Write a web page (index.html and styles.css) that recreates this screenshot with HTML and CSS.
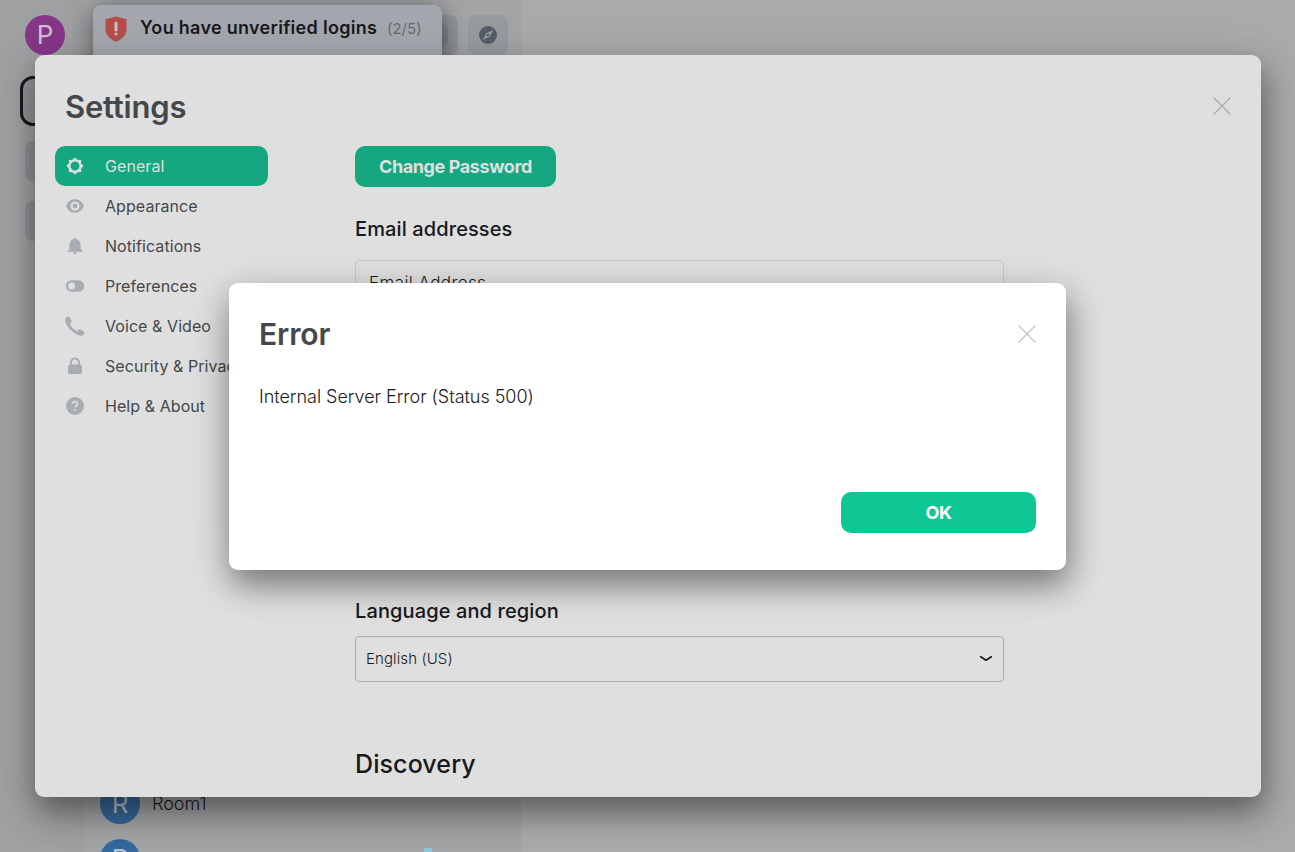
FILE: index.html
```html
<!DOCTYPE html>
<html lang="en">
<head>
<meta charset="utf-8">
<title>Settings</title>
<link rel="stylesheet" href="styles.css">
</head>
<body>
<div class="stage">
  <div class="app">
    <nav class="spaces">
      <div class="user">P</div>
      <div class="rule"></div>
      <div class="space active"></div>
      <div class="space"></div>
      <div class="space"></div>
    </nav>
    <aside class="rooms">
      <div class="toolbar">
        <div class="search"><span class="key"></span></div>
        <div class="explore">
          <svg width="18" height="18" viewBox="0 0 18 18"><circle cx="9" cy="9" r="9" fill="#575d68"/><path fill="#959a9f" fill-rule="evenodd" d="M14.2 4 10.800 10.800 3.800 14 7.200 7.200ZM9 7.700a1.300 1.300 0 1 0 0 2.600 1.300 1.300 0 0 0 0-2.600Z"/></svg>
        </div>
      </div>
      <div class="roomlist">
        <div class="room"><span class="avatar">R</span><span class="name">Room1</span></div>
        <div class="room"><span class="avatar bright">R</span><span class="picture"></span></div>
      </div>
    </aside>
    <main class="view"></main>
  </div>

  <div class="toasts">
    <div class="toast">
      <svg class="shield" width="22" height="26" viewBox="0 0 22 26"><path fill="#b74e4b" d="M11 0.5 21.5 3.3V13c0 6-4.5 10.5-10.5 12.7C5 23.500.500 19 .500 13V3.300Z"/><path d="M11 7v7" stroke="#c2c4c7" stroke-width="3" stroke-linecap="round"/><circle cx="11" cy="18" r="1.600" fill="#c2c4c7"/></svg>
      <span class="toast-title">You have unverified logins</span>
      <span class="toast-count">(2/5)</span>
    </div>
  </div>

  <div class="layer">
    <section class="dialog settings">
      <header class="head">
        <h1>Settings</h1>
        <svg class="close" width="18" height="18" viewBox="0 0 18 18"><path d="M.5.5l17 17M17.500.500l-17 17" stroke="#aaa" stroke-width="1.300" fill="none"/></svg>
      </header>
      <div class="columns">
        <ul class="tabs">
          <li class="tab selected"><svg width="20" height="20" viewBox="0 0 20 20"><circle cx="10" cy="10" r="5.700" fill="none" stroke="#dfdfdf" stroke-width="2.500"/><g fill="#dfdfdf"><circle cx="10" cy="3.100" r="1.400"/><circle cx="10" cy="16.900" r="1.400"/><circle cx="3.100" cy="10" r="1.400"/><circle cx="16.900" cy="10" r="1.400"/><circle cx="5.100" cy="5.100" r="1.400"/><circle cx="14.900" cy="5.100" r="1.400"/><circle cx="5.100" cy="14.900" r="1.400"/><circle cx="14.900" cy="14.900" r="1.400"/></g></svg><span>General</span></li>
          <li class="tab"><svg width="20" height="20" viewBox="0 0 20 20"><path fill="#a8adb4" fill-rule="evenodd" d="M1 10C2.500 5.800 5.800 3.200 10 3.200S17.500 5.800 19 10c-1.500 4.200-4.800 6.800-9 6.800S2.500 14.200 1 10ZM10 5.500a4.500 4.500 0 1 0 0 9 4.500 4.500 0 0 0 0-9Z"/><circle cx="10" cy="10" r="2.400" fill="#a8adb4"/></svg><span>Appearance</span></li>
          <li class="tab"><svg width="20" height="20" viewBox="0 0 20 20"><path fill="#a8adb4" d="M10 1.700c.8 0 1.300.5 1.300 1.200 2.600.6 4.200 2.700 4.200 5.600v4.200l1.800 2v1H2.700v-1l1.800-2V8.500c0-2.900 1.600-5 4.200-5.600 0-.7.5-1.200 1.300-1.200ZM8.200 16.600h3.600c0 1-.8 1.600-1.800 1.600s-1.800-.6-1.800-1.600Z"/></svg><span>Notifications</span></li>
          <li class="tab"><svg width="20" height="20" viewBox="0 0 20 20"><path fill="#a8adb4" fill-rule="evenodd" d="M6.500 4.200h7a5.800 5.800 0 0 1 0 11.600h-7a5.800 5.800 0 0 1 0-11.600ZM6.600 6.500a3.500 3.500 0 1 0 0 7 3.500 3.500 0 0 0 0-7Z"/></svg><span>Preferences</span></li>
          <li class="tab"><svg width="20" height="20" viewBox="0 0 20 20"><path fill="#a8adb4" d="M1 1.600C2 .4 3.500.2 4.400 1.300L6.500 4.600c.5.9 0 1.900-1 2.600-.6.600-.3 1.300 0 1.900 1.300 2.400 3 4.200 5.400 5.400.7.400 1.400.5 1.900-.1.700-1 1.800-1.400 2.700-.9l3.200 2c1.200.8 1 2.200 0 3.200-2 1.700-5.300.9-8.500-1.100C5.700 14.700 2.600 11.500 1 7.600.1 5.200-.1 2.900 1 1.600Z"/></svg><span>Voice &amp; Video</span></li>
          <li class="tab"><svg width="20" height="20" viewBox="0 0 20 20"><path fill="#a8adb4" fill-rule="evenodd" d="M5 8.500V6.600a5 5 0 0 1 10 0v1.900c1.300.1 2 .7 2 1.800v5.500c0 1.400-.7 2.200-2 2.200H5c-1.300 0-2-.8-2-2.200v-5.500c0-1.100.7-1.700 2-1.800Zm2 0h6V6.600a3 3 0 0 0-6 0Z"/></svg><span>Security &amp; Privacy</span></li>
          <li class="tab"><svg width="20" height="20" viewBox="0 0 20 20"><circle cx="10" cy="10" r="9" fill="#a8adb4"/><path d="M7.500 8c0-1.700 1-2.500 2.500-2.500s2.500.9 2.500 2.200c0 1.800-2.300 1.800-2.300 3.800" fill="none" stroke="#dfdfdf" stroke-width="1.700"/><circle cx="10.200" cy="14" r="1.100" fill="#dfdfdf"/></svg><span>Help &amp; About</span></li>
        </ul>
        <div class="content">
          <button class="button change">Change Password</button>
          <h3 class="email-title">Email addresses</h3>
          <div class="email-field">Email Address</div>
          <h3 class="language-title">Language and region</h3>
          <div class="select"><span>English (US)</span>
            <svg width="14" height="8" viewBox="0 0 14 8"><path d="M1.700 1.700 7 5.200l5.300-3.500" fill="none" stroke="#17191c" stroke-width="1.700" stroke-linecap="round" stroke-linejoin="round"/></svg>
          </div>
          <h2>Discovery</h2>
        </div>
      </div>
    </section>
  </div>

  <div class="layer front">
    <section class="dialog error">
      <header class="head">
        <h1>Error</h1>
        <svg class="close" width="18" height="18" viewBox="0 0 18 18"><path d="M.5.5l17 17M17.500.500l-17 17" stroke="#c4c4c4" stroke-width="1.300" fill="none"/></svg>
      </header>
      <p>Internal Server Error (Status 500)</p>
      <button class="button ok">OK</button>
    </section>
  </div>
</div>
</body>
</html>
```
FILE: styles.css
```css
* { box-sizing: border-box; }
body { margin: 0; overflow: hidden; font-family: Inter, "Liberation Sans", sans-serif; color: #17191c; }
h1, h2, h3, p, ul { margin: 0; padding: 0; }

.stage { display: grid; width: 1295px; height: 852px; overflow: hidden; }
.app, .toasts, .layer { grid-area: 1 / 1; min-width: 0; min-height: 0; }

.app { display: grid; grid-template-columns: 85px 436px 1fr; height: 852px; background: #a9aaab; }
.spaces { display: flex; flex-direction: column; padding: 15px 0 0 25px; background: #9fa0a1; }
.user { width: 40px; height: 40px; border-radius: 50%; background: #863688; color: #cfc0d0; font-size: 26px; line-height: 40px; text-align: center; }
.rule { height: 1px; margin: 10px 20px 10px 0; background: #969798; }
.space { width: 40px; height: 40px; margin-bottom: 20px; border-radius: 8px; background: #8e8f92; }
.space.active { width: 50px; height: 50px; margin: 0 0 15px -5px; border: 3px solid #17191c; border-radius: 13px; background: #929396; }

.rooms { display: flex; flex-direction: column; justify-content: space-between; overflow: hidden; background: #a3a4a5; }
.toolbar { display: flex; gap: 10px; padding: 15px 13px 0 15px; }
.search { display: flex; flex: 1; align-items: center; justify-content: flex-end; height: 40px; padding-right: 10px; border-radius: 8px; background: #95989b; }
.key { width: 24px; height: 24px; border-radius: 6px; background: #888b8f; }
.explore { display: grid; place-items: center; width: 40px; height: 40px; border-radius: 8px; background: #979b9e; }
.roomlist { height: 68px; padding-left: 15px; }
.room { display: flex; gap: 12px; height: 55px; }
.avatar { width: 40px; height: 40px; border-radius: 50%; background: #37699b; color: #b7c2cf; font-size: 26px; line-height: 40px; text-align: center; }
.avatar.bright { background: #34699d; }
.name { font-size: 18px; line-height: 40px; font-weight: 300; }
.picture { width: 8px; height: 8px; margin: 9px 0 0 272px; background: #8bc5dc; }

.toasts { padding: 5px 0 0 93px; }
.toast { display: flex; width: 349px; height: 100px; padding: 11px 12px; border-radius: 8px; background: #a4a7ad; box-shadow: 0 4px 24px rgba(0, 0, 0, .5); }
.shield { margin-right: 13px; }
.toast-title { width: 237px; margin-right: 10px; font-size: 18px; line-height: 23px; font-weight: 600; letter-spacing: .3px; white-space: nowrap; }
.toast-count { font-size: 15px; line-height: 25px; color: #666b73; }

.layer { padding: 55px 0 0 35px; }
.front { padding: 283px 0 0 229px; }
.dialog { border-radius: 9px; box-shadow: 2px 15px 32px rgba(0, 0, 0, .44), 0 8px 60px rgba(0, 0, 0, .07); overflow: hidden; }
.settings { width: 1226px; height: 742px; padding: 30px 30px 0 20px; background: #dfdfdf; }
.error { display: flex; flex-direction: column; width: 837px; height: 287px; padding: 30px; background: #fff; }
.head { display: flex; align-items: center; justify-content: space-between; height: 44px; }
h1 { color: #45474a; font-size: 31px; line-height: 44px; font-weight: 600; letter-spacing: -.2px; }
.error h1 { font-size: 30px; line-height: 42px; margin-top: -2px; letter-spacing: -.1px; }
.settings .head { padding-left: 10px; }
.close { margin-top: -3px; }

.columns { display: flex; gap: 87px; padding-top: 17px; }
.tabs { width: 213px; list-style: none; }
.tab { display: flex; align-items: center; gap: 20px; height: 40px; padding-left: 10px; border-radius: 10px; color: #45474a; font-size: 16px; white-space: nowrap; letter-spacing: .07px; }
.selected { background: #15a880; color: #dfdfdf; }
.content { display: flex; flex-direction: column; width: 649px; }
.button { height: 41px; padding: 0; border: 0; border-radius: 10px; font-family: inherit; font-size: 18px; font-weight: 700; letter-spacing: -.4px; }
.change { width: 201px; background: #15a880; color: #dfdfdf; }
h3 { font-size: 20px; line-height: 26px; font-weight: 500; letter-spacing: .11px; }
.email-title { margin-top: 29px; }
.email-field { height: 200px; margin-top: 18px; padding: 10px 13px; border: 1px solid #c8c8c9; border-radius: 4px; font-size: 17px; line-height: 24px; font-weight: 300; letter-spacing: .4px; }
.language-title { margin-top: 138px; }
.select { display: flex; align-items: center; justify-content: space-between; height: 46px; margin-top: 12px; padding: 0 10px; border: 1px solid #aaacad; border-radius: 4px; font-size: 15px; font-weight: 300; letter-spacing: .1px; }
.select span { padding-bottom: 2px; }
h2 { margin-top: 64px; font-size: 25px; line-height: 36px; font-weight: 500; letter-spacing: .1px; }

.error p { margin-top: 28px; font-size: 18px; line-height: 24px; font-weight: 300; letter-spacing: -.03px; }
.ok { width: 195px; margin: 83px 0 0 auto; background: #0fc795; color: #fff; }
```
